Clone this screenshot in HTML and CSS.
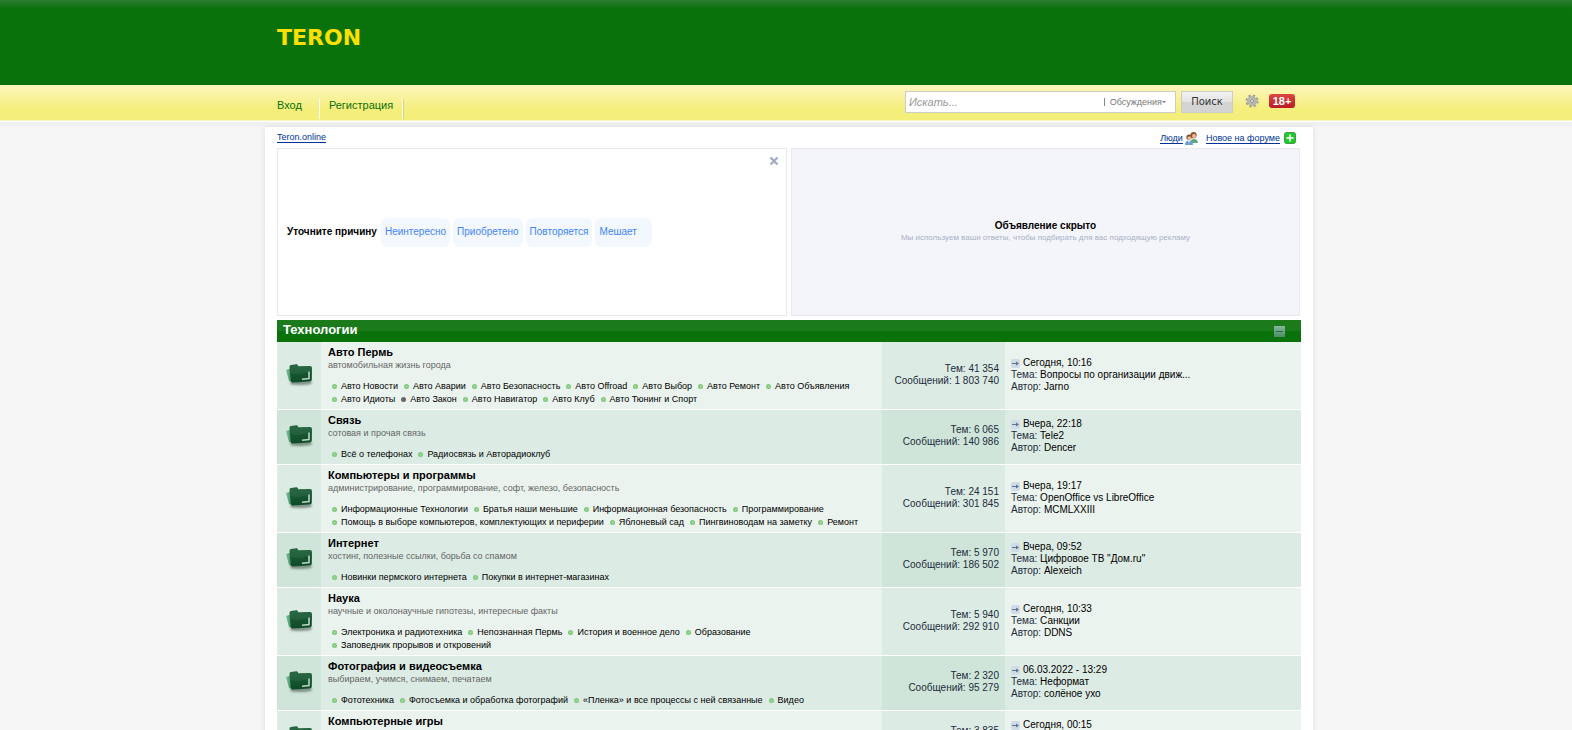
FILE: index.html
```
<!DOCTYPE html>
<html lang="ru">
<head>
<meta charset="utf-8">
<title>Teron.online</title>
<link rel="stylesheet" href="styles.css">
</head>
<body>
<svg class="defs" width="0" height="0" aria-hidden="true">
  <defs>
    <linearGradient id="fg" x1="0" y1="0" x2="0" y2="1"><stop offset="0" stop-color="#1d6138"/><stop offset="1" stop-color="#0f4a29"/></linearGradient>
    <linearGradient id="fb" x1="0" y1="0" x2="1" y2="0"><stop offset="0" stop-color="#7ec49a"/><stop offset="1" stop-color="#2f7a4e"/></linearGradient>
    <filter id="soft" x="-20%" y="-20%" width="140%" height="160%"><feGaussianBlur stdDeviation="1"/></filter>
  </defs>
  <symbol id="folder" viewBox="0 0 30 24">
    <path d="M5 18H27L26 21Q16 22.500 6 21.500Z" fill="#62766a" opacity=".8" filter="url(#soft)"/>
    <path d="M1 7L6 5.500L8 19L4 18Z" fill="url(#fb)"/>
    <path d="M4.500 4Q4.500 2.200 6 2L11.500 1.300Q12.800 1.200 13.300 3.300L25 3Q27 3 27 5L26.800 16.500Q26.800 18.300 25 18.400L8 19.600Q6 19.700 5.800 18Z" fill="url(#fg)"/>
    <path d="M5 10Q15 13 27 7L26.800 5Q26.500 3.500 25 3.500H13L12 2L6 2.500Q4.600 3 4.700 5Z" fill="#fff" opacity=".06"/>
    <path d="M24 8.500V15.500L17 16.300" fill="none" stroke="#bcd3c5" stroke-width="1.600"/>
  </symbol>
  <symbol id="arrow" viewBox="0 0 9 9">
    <rect width="9" height="9" rx="2" fill="#cfdbe5"/>
    <path d="M1 4H5V2.500L8 4.500L5 6.500V5H1Z" fill="#60758f"/>
  </symbol>
</svg>
<header class="top"><div class="wrap"><a class="logo" href="#">TERON</a></div></header>
<div class="bar"><div class="wrap bar-in">
  <nav class="menu"><a href="#">Вход</a><a href="#">Регистрация</a></nav>
  <form class="search">
    <div class="field">
      <input type="search" placeholder="Искать..." aria-label="Поиск по форуму">
      <button type="button" class="scope">Обсуждения<span class="caret"></span></button>
    </div>
    <button type="submit" class="go">Поиск</button>
    <a class="gear" href="#" aria-label="Расширенный поиск"><svg width="14" height="14" viewBox="0 0 14 14"><circle cx="7" cy="7" r="5.300" fill="none" stroke="#a3a39c" stroke-width="2.600" stroke-dasharray="2.400 1.760"/><circle cx="7" cy="7" r="3.600" fill="#d6d6d0" stroke="#b5b5b0" stroke-width="2.600"/><circle cx="7" cy="7" r="1.500" fill="#f4f3cf" stroke="#8d8d88"/></svg></a>
    <span class="age">18+</span>
  </form>
</div></div>
<main class="wrap page">
  <div class="crumbs">
    <a class="ul" href="#">Teron.online</a>
    <div class="quick">
      <a class="ul" href="#">Люди</a>
      <svg width="13" height="13" viewBox="0 0 13 13"><circle cx="8.500" cy="3.200" r="3.100" fill="#96512d"/><circle cx="9" cy="4" r="1.900" fill="#efc09a"/><path d="M5.500 11Q5.500 7 9 7T13 11Z" fill="#5ca878"/><circle cx="4" cy="5.200" r="2.600" fill="#765033"/><circle cx="4.300" cy="6.100" r="1.900" fill="#f0b98c"/><path d="M0 13Q0 8.500 4 8.500T8 13Z" fill="#6d9fd2"/><path d="M3 8.500H5L4 11Z" fill="#fff"/></svg>
      <a class="ul second" href="#">Новое на форуме</a>
      <svg width="12" height="12" viewBox="0 0 12 12"><rect x=".5" y=".5" width="11" height="11" rx="2" fill="#1ec92b" stroke="#3f9a48"/><path d="M6 2.500V9.500M2.500 6H9.500" stroke="#d8f8d8" stroke-width="2"/></svg>
    </div>
  </div>
  <div class="ads">
    <section class="ad reasons">
      <button type="button" class="close" aria-label="Закрыть"><svg width="10" height="10" viewBox="0 0 10 10"><path d="M1.500 1.500L8.500 8.500M8.500 1.500L1.500 8.500" stroke="#a3a9c4" stroke-width="2.200"/></svg></button>
      <strong>Уточните причину</strong>
      <div class="chips"><button type="button">Неинтересно</button><button type="button">Приобретено</button><button type="button">Повторяется</button><button type="button" class="last">Мешает</button></div>
    </section>
    <section class="ad hidden-ad"><strong>Объявление скрыто</strong><p>Мы используем ваши ответы, чтобы подбирать для вас подходящую рекламу</p></section>
  </div>
  <div class="cat"><h2>Технологии</h2><button type="button" class="fold" aria-label="Свернуть"></button></div>
  <table class="forums">
    <colgroup><col class="c-icon"><col><col class="c-stat"><col class="c-last"></colgroup>
    <tbody>
    <tr><td><svg class="fi"><use href="#folder"/></svg></td>
      <td><h3><a href="#">Авто Пермь</a></h3><p>автомобильная жизнь города</p><ul><li><a href="#">Авто Новости</a></li><li><a href="#">Авто Аварии</a></li><li><a href="#">Авто Безопасность</a></li><li><a href="#">Авто Offroad</a></li><li><a href="#">Авто Выбор</a></li><li><a href="#">Авто Ремонт</a></li><li><a href="#">Авто Объявления</a></li><li><a href="#">Авто Идиоты</a></li><li class="off"><a href="#">Авто Закон</a></li><li><a href="#">Авто Навигатор</a></li><li><a href="#">Авто Клуб</a></li><li><a href="#">Авто Тюнинг и Спорт</a></li></ul></td>
      <td><b>Тем:</b> 41 354<br><b>Сообщений:</b> 1 803 740</td>
      <td><svg class="ar"><use href="#arrow"/></svg><a href="#">Сегодня, 10:16</a><br><b>Тема:</b> <a href="#">Вопросы по организации движ...</a><br><b>Автор:</b> <a href="#">Jarno</a></td></tr>
    <tr><td><svg class="fi"><use href="#folder"/></svg></td>
      <td><h3><a href="#">Связь</a></h3><p>сотовая и прочая связь</p><ul><li><a href="#">Всё о телефонах</a></li><li><a href="#">Радиосвязь и Авторадиоклуб</a></li></ul></td>
      <td><b>Тем:</b> 6 065<br><b>Сообщений:</b> 140 986</td>
      <td><svg class="ar"><use href="#arrow"/></svg><a href="#">Вчера, 22:18</a><br><b>Тема:</b> <a href="#">Tele2</a><br><b>Автор:</b> <a href="#">Dencer</a></td></tr>
    <tr><td><svg class="fi"><use href="#folder"/></svg></td>
      <td><h3><a href="#">Компьютеры и программы</a></h3><p>администрирование, программирование, софт, железо, безопасность</p><ul><li><a href="#">Информационные Технологии</a></li><li><a href="#">Братья наши меньшие</a></li><li><a href="#">Информационная безопасность</a></li><li><a href="#">Программирование</a></li><li><a href="#">Помощь в выборе компьютеров, комплектующих и периферии</a></li><li><a href="#">Яблоневый сад</a></li><li><a href="#">Пингвиноводам на заметку</a></li><li><a href="#">Ремонт</a></li></ul></td>
      <td><b>Тем:</b> 24 151<br><b>Сообщений:</b> 301 845</td>
      <td><svg class="ar"><use href="#arrow"/></svg><a href="#">Вчера, 19:17</a><br><b>Тема:</b> <a href="#">OpenOffice vs LibreOffice</a><br><b>Автор:</b> <a href="#">MCMLXXIII</a></td></tr>
    <tr><td><svg class="fi"><use href="#folder"/></svg></td>
      <td><h3><a href="#">Интернет</a></h3><p>хостинг, полезные ссылки, борьба со спамом</p><ul><li><a href="#">Новинки пермского интернета</a></li><li><a href="#">Покупки в интернет-магазинах</a></li></ul></td>
      <td><b>Тем:</b> 5 970<br><b>Сообщений:</b> 186 502</td>
      <td><svg class="ar"><use href="#arrow"/></svg><a href="#">Вчера, 09:52</a><br><b>Тема:</b> <a href="#">Цифровое ТВ "Дом.ru"</a><br><b>Автор:</b> <a href="#">Alexeich</a></td></tr>
    <tr><td><svg class="fi"><use href="#folder"/></svg></td>
      <td><h3><a href="#">Наука</a></h3><p>научные и околонаучные гипотезы, интересные факты</p><ul><li><a href="#">Электроника и радиотехника</a></li><li><a href="#">Непознанная Пермь</a></li><li><a href="#">История и военное дело</a></li><li><a href="#">Образование</a></li><li><a href="#">Заповедник прорывов и откровений</a></li></ul></td>
      <td><b>Тем:</b> 5 940<br><b>Сообщений:</b> 292 910</td>
      <td><svg class="ar"><use href="#arrow"/></svg><a href="#">Сегодня, 10:33</a><br><b>Тема:</b> <a href="#">Санкции</a><br><b>Автор:</b> <a href="#">DDNS</a></td></tr>
    <tr><td><svg class="fi"><use href="#folder"/></svg></td>
      <td><h3><a href="#">Фотография и видеосъемка</a></h3><p>выбираем, учимся, снимаем, печатаем</p><ul><li><a href="#">Фототехника</a></li><li><a href="#">Фотосъемка и обработка фотографий</a></li><li><a href="#">«Пленка» и все процессы с ней связанные</a></li><li><a href="#">Видео</a></li></ul></td>
      <td><b>Тем:</b> 2 320<br><b>Сообщений:</b> 95 279</td>
      <td><svg class="ar"><use href="#arrow"/></svg><a href="#">06.03.2022 - 13:29</a><br><b>Тема:</b> <a href="#">Неформат</a><br><b>Автор:</b> <a href="#">солёное ухо</a></td></tr>
    <tr><td><svg class="fi"><use href="#folder"/></svg></td>
      <td><h3><a href="#">Компьютерные игры</a></h3><p>обсуждение игр, ПО</p><ul><li><a href="#">Игры</a></li></ul></td>
      <td><b>Тем:</b> 3 835<br><b>Сообщений:</b> 120 410</td>
      <td><svg class="ar"><use href="#arrow"/></svg><a href="#">Сегодня, 00:15</a><br><b>Тема:</b> <a href="#">Игры</a><br><b>Автор:</b> <a href="#">Jarno</a></td></tr>
    </tbody>
  </table>
</main>
</body>
</html>
```
FILE: styles.css
```
* { box-sizing: border-box; }
html { height: 100%; overflow: hidden; }
body { margin: 0; height: 100%; overflow: hidden; background: #f6f6f6; font: 9px/12px "Liberation Sans", Arial, sans-serif; color: #1d2c3c; }
a { color: #000; text-decoration: none; }
button, input { font: inherit; margin: 0; }
h2, h3, p, ul { margin: 0; padding: 0; }
svg { display: block; flex: none; }
.defs { position: absolute; }
.wrap { width: 1048px; max-width: 100%; margin: 0 auto; padding: 0 12px; position: relative; left: 3px; }
.top { background: linear-gradient(#2c7a33, #0a720a 9px); height: 85px; }
.logo { display: inline-block; padding-top: 26px; font: bold 22px/24px "DejaVu Sans", sans-serif; color: #fde000; }
.bar { background: linear-gradient(#fdf6bd, #f4ee7a 25px, #f4ee7a 35px, #fff 36px, #fff 37px, #f1f1f1 37px); height: 42px; }
.bar-in { display: flex; justify-content: space-between; }
.menu { display: flex; padding-top: 14px; font-size: 11px; line-height: 13px; }
.menu a { color: #0a720a; height: 20px; border-right: 1px solid #fff; padding-right: 17px; }
.menu a + a { padding: 0 9px; box-shadow: 1px 0 #d8d27a; }
.search { display: flex; align-items: flex-start; padding: 6px 6px 0 0; }
.field { display: flex; align-items: center; width: 271px; height: 22px; background: #fff; border: 1px solid #ccc; }
.field input { flex: 1; min-width: 0; border: 0; padding: 0 3px; background: none; font-size: 11px; font-style: italic; outline: 0; }
.field input::placeholder { color: #999; opacity: 1; }
.scope { display: flex; align-items: center; height: 8px; border: 0; border-left: 1px solid #888; background: none; padding: 0 9px 0 5px; color: #777; }
.caret { border: 2px solid transparent; border-top-color: #777; border-bottom: 0; }
.go { width: 52px; height: 22px; margin-left: 5px; border: 1px solid #ccc; background: linear-gradient(#f2f2f2, #e2e2e2 50%, #d4d4d4 50%); color: #333; padding: 0; font: 10px/12px "DejaVu Sans", sans-serif; }
.gear { margin: 3px 10px 0 12px; }
.age { margin-top: 3px; width: 26px; height: 14px; border-radius: 3px; background: linear-gradient(#dd4545, #b91c22); color: #fff; font: bold 11px/14px "Liberation Sans", sans-serif; text-align: center; }
.page { background: #fff; box-shadow: 0 0 5px #ddd; min-height: calc(100% - 127px); }
.crumbs { display: flex; justify-content: space-between; height: 21px; padding-top: 4px; }
.ul { color: #039; border-bottom: 1px solid #039; height: 12px; }
.quick { display: flex; padding: 1px 5px 0 0; gap: 2px; }
.quick .second { margin-left: 6px; margin-right: 2px; }
.ads { display: grid; grid-template-columns: 1fr 1fr; gap: 4px; margin-bottom: 4px; }
.ad { border: 1px solid #e9e9e9; height: 168px; display: flex; align-items: center; position: relative; color: #000; font-size: 10px; }
.ad strong { font-weight: 700; font-size: 10px; }
.reasons { padding-left: 9px; gap: 4px; }
.close { position: absolute; right: 7px; top: 7px; border: 0; background: none; padding: 0; }
.chips { display: flex; gap: 3px; }
.chips button { height: 29px; border: 0; border-radius: 6px; background: #f3f8ff; color: #4284f5; padding: 0 4px; }
.chips .last { padding-right: 15px; }
.hidden-ad { flex-direction: column; justify-content: center; background: #f4f5fb; margin-right: 1px; }
.hidden-ad p { color: #a9b0c6; font-size: 8px; line-height: 12px; }
.cat { display: flex; align-items: center; justify-content: space-between; height: 22px; padding: 0 16px 0 6px; background: linear-gradient(#1b7b1b, #1b7b1b 50%, #0a720a 50%); color: #fff; }
.cat h2 { font-size: 13px; line-height: 14px; padding-bottom: 2px; }
.fold { width: 11px; height: 11px; border: 0; padding: 0; background: linear-gradient(#1f6b43, #1f6b43) center / 7px 1px no-repeat, linear-gradient(#86b89c, #4c8c68); }
.forums { width: 100%; table-layout: fixed; border-collapse: collapse; }
.c-icon { width: 44px; }
.c-stat { width: 123px; }
.c-last { width: 296px; }
.forums tr { background: #eaf3ee; border-bottom: 1px solid #fff; }
.forums tr:nth-child(even) { background: #dcebe4; }
.forums td { padding: 0 6px 2px; vertical-align: middle; font-size: 10px; }
.forums td:nth-child(odd) { background: #dcebe4; }
.forums tr:nth-child(even) td:nth-child(odd) { background: #cfe5d9; }
.forums td:nth-child(2) { padding: 4px 7px 3px; font-size: 9px; }
.forums td:nth-child(3) { text-align: right; }
.forums td:nth-child(4) { line-height: 12px; }
.forums b { font-weight: 500; }
.fi { width: 30px; height: 24px; margin-left: 2px; }
.ar { display: inline-block; width: 9px; height: 9px; margin-right: 3px; vertical-align: -2px; }
h3 { font-size: 11px; line-height: 13px; }
.forums p { color: #666; margin-bottom: 9px; }
.forums ul { display: flex; flex-wrap: wrap; list-style: none; line-height: 13px; padding-left: 4px; column-gap: 6px; max-width: 532px; }
.forums li { display: flex; align-items: center; gap: 4px; }
.forums li::before { content: ""; width: 5px; height: 5px; border-radius: 50%; background: radial-gradient(#a0dc98, #69b869); }
.forums li.off::before { background: #666; }
```
